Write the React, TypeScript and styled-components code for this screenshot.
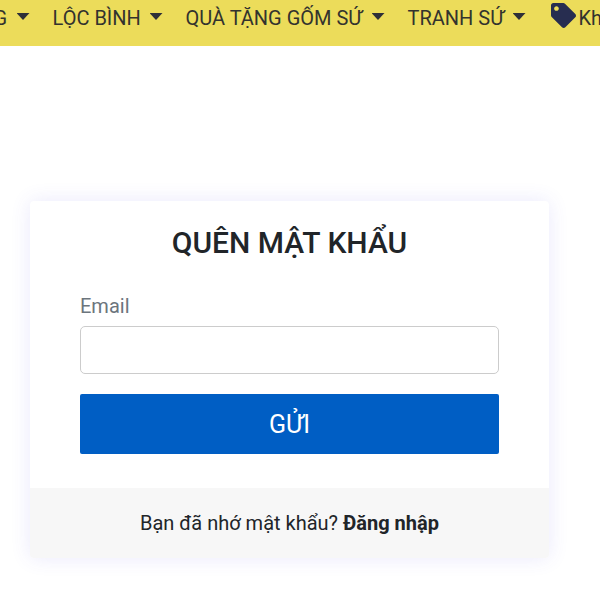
import React from "react";
import styled, { createGlobalStyle } from "styled-components";

const GlobalStyle = createGlobalStyle`
  *, *::before, *::after { box-sizing: border-box; }
  html, body { margin: 0; background: #fff; overflow: hidden; }
  body { font-family: Roboto, "Noto Sans", sans-serif; font-size: 20px; line-height: 30px; color: #212529; }
`;

const Page = styled.div`
  width: 600px;
  height: 600px;
  overflow: hidden;
`;

const Navbar = styled.nav`
  height: 46px;
  padding-top: 3px;
  display: flex;
  align-items: flex-start;
  background: #ecdc5a;
  color: #33332e;
  overflow: hidden;
  white-space: nowrap;
`;

const NavItem = styled.a<{ $width: number; $shift?: number }>`
  flex: none;
  width: ${(p) => p.$width}px;
  margin-left: ${(p) => p.$shift ?? 0}px;
  display: flex;
  justify-content: space-between;
`;

const Caret = styled.span`
  margin-top: 10px;
  width: 13px;
  height: 7px;
  background: #2f3038;
  clip-path: polygon(0 0, 100% 0, 50% 100%);
`;

const Tag = styled.svg`
  flex: none;
  width: 25px;
  height: 25px;
  margin: 0 3px 0 25px;
  color: #272d50;
`;

const Card = styled.main`
  width: 519px;
  height: 357px;
  margin: 155px 0 0 30px;
  border-radius: 4px;
  display: flex;
  flex-direction: column;
  box-shadow: 0 0 20px rgba(80, 70, 230, 0.12);
  overflow: hidden;
`;

const Form = styled.form`
  height: 287px;
  padding: 24px 50px 0;
  display: flex;
  flex-direction: column;
`;

const Title = styled.h1`
  margin: 0;
  font-size: 30px;
  line-height: 36px;
  font-weight: 500;
  text-align: center;
`;

const Label = styled.label`
  margin-top: 30px;
  color: #6c757d;
`;

const Input = styled.input`
  width: 100%;
  height: 48px;
  margin-top: 5px;
  border: 1px solid #cccccc;
  border-radius: 5px;
  padding: 6px 12px;
  font: inherit;
`;

const Submit = styled.button`
  height: 60px;
  margin-top: 20px;
  padding: 2px 6px 0;
  border: 0;
  border-radius: 2px;
  background: #005ec4;
  color: #fff;
  font: 400 25px/38px Roboto, sans-serif;
`;

const Footer = styled.footer`
  flex: 1;
  padding-top: 20px;
  background: #f7f7f7;
  text-align: center;
`;

const Login = styled.a`
  font-weight: 700;
`;

export default function App() {
  return (
    <Page>
      <GlobalStyle />
      <Navbar>
        <NavItem $width={36} $shift={-6.5}>G<Caret /></NavItem>
        <NavItem $width={110} $shift={23}>LỘC BÌNH<Caret /></NavItem>
        <NavItem $width={199} $shift={23}>QUÀ TẶNG GỐM SỨ<Caret /></NavItem>
        <NavItem $width={118} $shift={23}>TRANH SỨ<Caret /></NavItem>
        <Tag viewBox="0 0 512 512" fill="currentColor" aria-hidden="true">
          <path d="M0 252.118V48C0 21.49 21.49 0 48 0h204.118a48 48 0 0 1 33.941 14.059l211.882 211.882c18.745 18.745 18.745 49.137 0 67.882L293.823 497.941c-18.745 18.745-49.137 18.745-67.882 0L14.059 286.059A48 48 0 0 1 0 252.118zM112 64c-26.51 0-48 21.49-48 48s21.49 48 48 48 48-21.49 48-48-21.49-48-48-48z" />
        </Tag>
        <span>Khuyến mãi</span>
      </Navbar>
      <Card>
        <Form>
          <Title>QUÊN MẬT KHẨU</Title>
          <Label htmlFor="email">Email</Label>
          <Input id="email" type="email" />
          <Submit type="button">GỬI</Submit>
        </Form>
        <Footer>Bạn đã nhớ mật khẩu? <Login>Đăng nhập</Login></Footer>
      </Card>
    </Page>
  );
}
